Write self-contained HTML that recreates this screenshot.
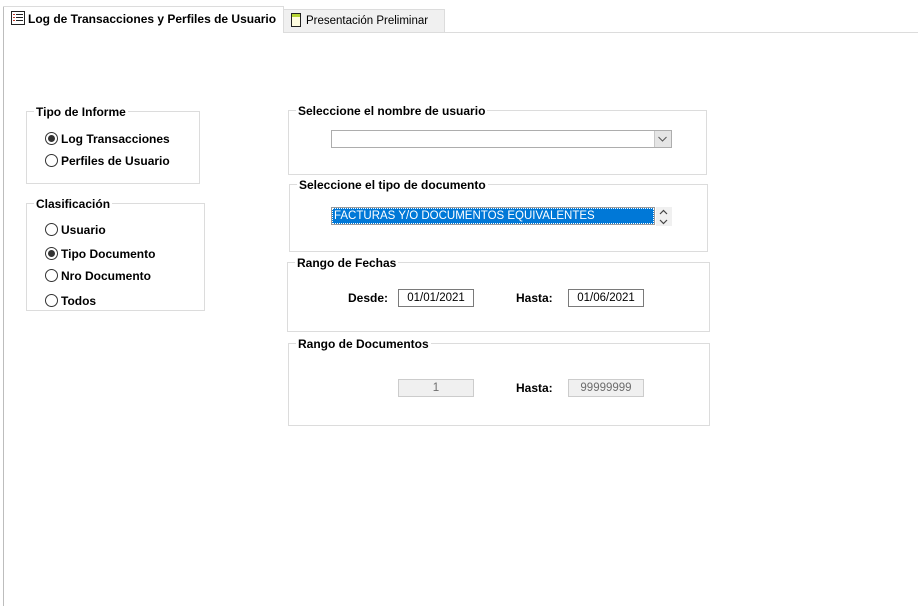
<!DOCTYPE html>
<html><head><meta charset="utf-8"><style>
*{margin:0;padding:0;box-sizing:border-box}
body{width:918px;height:603px;background:#fff;position:relative;overflow:hidden;font-family:"Liberation Sans",Arial,sans-serif;font-size:12px;color:#000}
.a{position:absolute}
.gb{position:absolute;border:1px solid #dcdcdc}
.gt{position:absolute;top:-7px;left:7px;background:#fff;padding:0 2px;font-weight:bold;font-size:12px;line-height:14px;white-space:nowrap}
.rb{position:absolute;width:13px;height:13px;border:1px solid #333;border-radius:50%;background:#fff}
.rb.on::after{content:"";position:absolute;left:2px;top:2px;width:7px;height:7px;border-radius:50%;background:#333}
.rl{position:absolute;font-weight:bold;font-size:12px;line-height:14px;white-space:nowrap}
.fld{position:absolute;height:18px;border:1px solid #7a7a7a;text-align:center;font-size:11.5px;line-height:17px;background:#fff}
.dis{border-color:#cccccc;background:#f0f0f0;color:#6d6d6d}
</style></head><body>
<!-- tabs -->
<div class="a" style="left:3px;top:6px;width:1px;height:600px;background:#bdbdbd"></div>
<div class="a" style="left:3px;top:6px;width:281px;height:27px;border-top:1px solid #dcdcdc;border-right:1px solid #dcdcdc"></div>
<div class="a" style="left:284px;top:9px;width:161px;height:23px;background:#f0f0f0;border:1px solid #dcdcdc;border-bottom:none;border-left:none"></div>
<div class="a" style="left:284px;top:32px;width:634px;height:1px;background:#dcdcdc"></div>
<svg class="a" style="left:11px;top:11px" width="14" height="14" viewBox="0 0 14 14"><rect x="0.5" y="0.5" width="13" height="13" fill="#fff" stroke="#222"/><g stroke="#c0392b"><line x1="2" y1="3.5" x2="4" y2="3.5"/><line x1="2" y1="6.5" x2="4" y2="6.5"/><line x1="2" y1="9.5" x2="4" y2="9.5"/></g><g stroke="#222"><line x1="5" y1="3.5" x2="12" y2="3.5"/><line x1="5" y1="6.5" x2="12" y2="6.5"/><line x1="5" y1="9.5" x2="12" y2="9.5"/></g></svg>
<div class="a" style="left:28px;top:12px;font-weight:bold;font-size:12px;line-height:14px;white-space:nowrap">Log de Transacciones y Perfiles de Usuario</div>
<svg class="a" style="left:291px;top:13px" width="10" height="14" viewBox="0 0 10 14"><rect x="0.5" y="0.5" width="9" height="13" fill="#fffde0" stroke="#222"/><rect x="1" y="1" width="8" height="3" fill="#b5d334"/></svg>
<div class="a" style="left:306px;top:14px;font-size:11.5px;line-height:14px;white-space:nowrap">Presentación Preliminar</div>

<div class="gb" style="left:26px;top:111px;width:174px;height:73px"><div class="gt">Tipo de Informe</div></div>
<div class="rb on" style="left:45px;top:132px"></div><div class="rl" style="left:61px;top:132px">Log Transacciones</div>
<div class="rb" style="left:45px;top:154px"></div><div class="rl" style="left:61px;top:154px">Perfiles de Usuario</div>

<div class="gb" style="left:26px;top:203px;width:179px;height:108px"><div class="gt">Clasificación</div></div>
<div class="rb" style="left:45px;top:223px"></div><div class="rl" style="left:61px;top:223px">Usuario</div>
<div class="rb on" style="left:45px;top:247px"></div><div class="rl" style="left:61px;top:247px">Tipo Documento</div>
<div class="rb" style="left:45px;top:269px"></div><div class="rl" style="left:61px;top:269px">Nro Documento</div>
<div class="rb" style="left:45px;top:294px"></div><div class="rl" style="left:61px;top:294px">Todos</div>

<div class="gb" style="left:288px;top:110px;width:419px;height:65px"><div class="gt">Seleccione el nombre de usuario</div></div>
<div class="a" style="left:331px;top:130px;width:341px;height:18px;border:1px solid #adadad;background:#fff"></div>
<div class="a" style="left:654px;top:131px;width:17px;height:16px;background:#e5e5e5;border-left:1px solid #c8c8c8"></div>
<svg class="a" style="left:658px;top:136px" width="9" height="6" viewBox="0 0 9 6"><path d="M0.5 1 L4.5 5 L8.5 1" fill="none" stroke="#555"/></svg>

<div class="gb" style="left:289px;top:184px;width:419px;height:68px"><div class="gt">Seleccione el tipo de documento</div></div>
<div class="a" style="left:331px;top:207px;width:324px;height:18px;border:1px solid #999;background:#0078d7;color:#fff;font-size:11.5px;line-height:16px;padding-left:2px;outline:1px dotted #fff;outline-offset:-2px">FACTURAS Y/O DOCUMENTOS EQUIVALENTES</div>
<div class="a" style="left:656px;top:207px;width:16px;height:19px;background:#f0f0f0"></div>
<svg class="a" style="left:659px;top:209px" width="9" height="16" viewBox="0 0 9 16"><path d="M1 5 L4.5 1.5 L8 5 M1 11 L4.5 14.5 L8 11" fill="none" stroke="#444" stroke-width="1.2"/></svg>

<div class="gb" style="left:287px;top:262px;width:423px;height:70px"><div class="gt">Rango de Fechas</div></div>
<div class="rl" style="left:348px;top:291px">Desde:</div>
<div class="fld" style="left:398px;top:289px;width:76px">01/01/2021</div>
<div class="rl" style="left:516px;top:291px">Hasta:</div>
<div class="fld" style="left:568px;top:289px;width:76px">01/06/2021</div>

<div class="gb" style="left:288px;top:343px;width:422px;height:83px"><div class="gt">Rango de Documentos</div></div>
<div class="fld dis" style="left:398px;top:379px;width:76px">1</div>
<div class="rl" style="left:516px;top:381px">Hasta:</div>
<div class="fld dis" style="left:568px;top:379px;width:76px">99999999</div>
</body></html>
